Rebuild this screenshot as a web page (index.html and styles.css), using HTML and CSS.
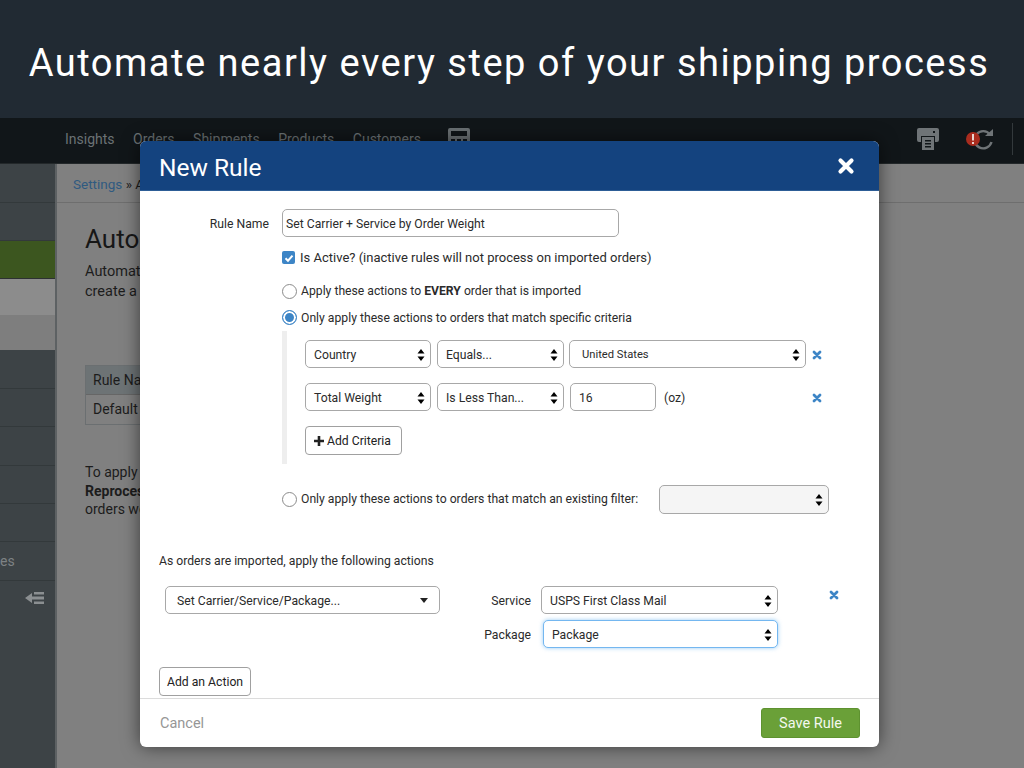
FILE: index.html
```html
<!DOCTYPE html>
<html lang="en">
<head>
<meta charset="utf-8">
<title>New Rule</title>
<link rel="stylesheet" href="styles.css">
</head>
<body>
<header class="banner"><h1>Automate nearly every step of your shipping process</h1></header>
<div class="app">
  <nav class="topnav">
    <a>Insights</a><a>Orders</a><a>Shipments</a><a>Products</a><a>Customers</a>
    <svg class="calc" width="24" height="24" viewBox="0 0 24 24"><path fill="#6a7073" fill-rule="evenodd" d="M3 1h18a2 2 0 0 1 2 2v19H1V3a2 2 0 0 1 2-2zm1 3v5h16V4zm0 8v3h4v-3zm6 0v3h4v-3zm6 0v3h4v-3z"/></svg>
    <span class="nav-spacer"></span>
    <svg class="printer" width="22" height="22" viewBox="0 0 22 22"><path fill="#6f7477" fill-rule="evenodd" d="M2 0h18a2 2 0 0 1 2 2v10a2 2 0 0 1-2 2h-2V8H4v6H2a2 2 0 0 1-2-2V2a2 2 0 0 1 2-2zm14 3v2h2V3zM5 9h12v13H5zm3 3v1.500h6V12zm0 3v1.500h6V15zm0 3v1.500h6V18z"/></svg>
    <span class="sync">
      <svg width="30" height="24" viewBox="0 0 30 24"><path fill="none" stroke="#6f7477" stroke-width="2.400" d="M24 6.500A8.600 8.600 0 1 0 25.500 14"/><path fill="#6f7477" d="M19 8h8V1z"/><circle cx="7" cy="11" r="7" fill="#a92c1e"/><rect x="6" y="6" width="2" height="6.500" fill="#e9d5d0"/><rect x="6" y="14" width="2" height="2" fill="#e9d5d0"/></svg>
    </span>
    <span class="nav-divider"></span>
  </nav>
  <div class="workspace">
    <aside class="sidebar">
      <div class="side-row side-first"></div>
      <div class="side-row"></div>
      <div class="side-row side-green"></div>
      <div class="side-row side-light"></div>
      <div class="side-row side-mid"></div>
      <div class="side-row"></div>
      <div class="side-row"></div>
      <div class="side-row"></div>
      <div class="side-row"></div>
      <div class="side-row"></div>
      <div class="side-row side-text">es</div>
      <div class="side-row side-collapse">
        <svg width="20" height="14" viewBox="0 0 20 14"><path fill="#8b8f91" d="M0 7l7-5v3.500h12v3H7V12zM9 1h10v2.500H9zM9 10.500h10V13H9z"/></svg>
      </div>
    </aside>
    <main class="page">
      <div class="crumbs"><a>Settings</a> » Automation</div>
      <div class="page-body">
        <h2>Automation Rules</h2>
        <p class="intro">Automate your workflow<br>create a rule</p>
        <div class="rules-table">
          <div class="rules-head">Rule Name</div>
          <div class="rules-cell">Default Carrier</div>
        </div>
        <p class="note">To apply rules<br><b>Reprocess</b><br>orders were</p>
      </div>
    </main>
  </div>

  <section class="modal">
    <header class="modal-head">
      <h3>New Rule</h3>
      <svg class="close" width="18" height="18" viewBox="0 0 18 18"><path d="M3.500 3.500l11 11M14.500 3.500l-11 11" stroke="#fff" stroke-width="4.200" stroke-linecap="round"/></svg>
    </header>
    <div class="modal-body">
      <div class="name-row">
        <label class="name-label">Rule Name</label>
        <div class="field name-field">Set Carrier + Service by Order Weight</div>
      </div>
      <div class="options">
        <div class="check-row">
          <span class="checkbox"><svg width="10" height="10" viewBox="0 0 10 10"><path d="M1.500 5.200l2.500 2.500 4.500-5" fill="none" stroke="#fff" stroke-width="2"/></svg></span>
          <span>Is Active? (inactive rules will not process on imported orders)</span>
        </div>
        <div class="radio-row first-radio"><span class="radio"></span><span>Apply these actions to <b>EVERY</b> order that is imported</span></div>
        <div class="radio-row second-radio"><span class="radio radio-on"></span><span class="radio-text">Only apply these actions to orders that match specific criteria</span></div>
        <div class="criteria">
          <div class="crit-row">
            <div class="field select w-a">Country<svg class="updown" width="8" height="14" viewBox="0 0 8 14"><path d="M4 1l3.500 4.500h-7zM4 13L.5 8.500h7z"/></svg></div>
            <div class="field select w-b">Equals...<svg class="updown" width="8" height="14" viewBox="0 0 8 14"><path d="M4 1l3.500 4.500h-7zM4 13L.5 8.500h7z"/></svg></div>
            <div class="field select w-c pad-wide">United States<svg class="updown" width="8" height="14" viewBox="0 0 8 14"><path d="M4 1l3.500 4.500h-7zM4 13L.5 8.500h7z"/></svg></div>
            <svg class="remove crit-remove" width="10" height="10" viewBox="0 0 10 10"><path d="M2 2l6 6M8 2L2 8" stroke="#3d85c6" stroke-width="2.800" stroke-linecap="round"/></svg>
          </div>
          <div class="crit-row">
            <div class="field select w-a">Total Weight<svg class="updown" width="8" height="14" viewBox="0 0 8 14"><path d="M4 1l3.500 4.500h-7zM4 13L.5 8.500h7z"/></svg></div>
            <div class="field select w-b">Is Less Than...<svg class="updown" width="8" height="14" viewBox="0 0 8 14"><path d="M4 1l3.500 4.500h-7zM4 13L.5 8.500h7z"/></svg></div>
            <div class="field w-d">16</div>
            <span class="unit">(oz)</span>
            <svg class="remove crit-remove-2" width="10" height="10" viewBox="0 0 10 10"><path d="M2 2l6 6M8 2L2 8" stroke="#3d85c6" stroke-width="2.800" stroke-linecap="round"/></svg>
          </div>
          <button class="btn add-criteria"><svg width="10" height="10" viewBox="0 0 10 10"><path d="M5 0v10M0 5h10" stroke="#222" stroke-width="2.600"/></svg>Add Criteria</button>
        </div>
        <div class="radio-row filter-row">
          <span class="radio"></span><span>Only apply these actions to orders that match an existing filter:</span>
          <div class="field select w-f"><svg class="updown" width="8" height="14" viewBox="0 0 8 14"><path d="M4 1l3.500 4.500h-7zM4 13L.5 8.500h7z"/></svg></div>
        </div>
      </div>
      <p class="apply-text">As orders are imported, apply the following actions</p>
      <div class="action-row">
        <div class="field select w-action">Set Carrier/Service/Package...<svg width="8" height="5" viewBox="0 0 8 5"><path d="M0 0h8L4 5z" fill="#222"/></svg></div>
        <div class="service-grid">
          <label class="service-label">Service</label>
          <div class="field select w-s">USPS First Class Mail<svg class="updown" width="8" height="14" viewBox="0 0 8 14"><path d="M4 1l3.500 4.500h-7zM4 13L.5 8.500h7z"/></svg></div>
          <label class="service-label">Package</label>
          <div class="field select w-p focus">Package<svg class="updown" width="8" height="14" viewBox="0 0 8 14"><path d="M4 1l3.500 4.500h-7zM4 13L.5 8.500h7z"/></svg></div>
        </div>
        <svg class="remove action-remove" width="10" height="10" viewBox="0 0 10 10"><path d="M2 2l6 6M8 2L2 8" stroke="#3d85c6" stroke-width="2.800" stroke-linecap="round"/></svg>
      </div>
      <button class="btn add-action">Add an Action</button>
    </div>
    <footer class="modal-foot">
      <a class="cancel">Cancel</a>
      <button class="save">Save Rule</button>
    </footer>
  </section>
</div>
</body>
</html>
```

FILE: styles.css
```css
* { box-sizing: border-box; }
html, body { margin: 0; padding: 0; }
body {
  width: 1024px;
  height: 768px;
  overflow: hidden;
  font-family: Roboto, "Liberation Sans", sans-serif;
  background: #808080;
  color: #262626;
}
.banner {
  height: 118px;
  background: #212a33;
  display: flex;
  align-items: center;
  justify-content: center;
  padding: 8px 6px 0 0;
}
.banner h1 {
  margin: 0;
  font-size: 38px;
  font-weight: 400;
  letter-spacing: 1.51px;
  color: #fff;
  white-space: nowrap;
}
.app { position: relative; height: 650px; display: flex; flex-direction: column; }
.topnav {
  height: 46px;
  flex: none;
  background: #111619;
  border-bottom: 1px solid #23282a;
  display: flex;
  align-items: flex-start;
  padding: 13px 0 0 65px;
  font-size: 14px;
  color: #6b7275;
}
.topnav a { margin-right: 18.500px; line-height: 17px; }
.calc { margin: -4px 0 0 8px; }
.nav-spacer { flex: 1; }
.printer { margin: -3px 1px 0 0; }
.sync { margin: -3px 0 0 26px; display: block; height: 24px; }
.nav-divider { width: 1px; height: 32px; margin: -8px 11px 0 16px; background: #33393c; }

.workspace { flex: 1; display: flex; }
.sidebar {
  width: 57px;
  flex: none;
  background: #3d4346;
  border-right: 2px solid #5d6163;
  display: flex;
  flex-direction: column;
}
.side-row { height: 38.400px; border-bottom: 1px solid #33393b; flex: none; font-size: 14px; color: #7d8284; }
.side-first { height: 39px; }
.side-green { background: #3c561f; height: 38px; border-bottom-color: #2d3132; }
.side-light { background: #8c8c8c; height: 36px; border-bottom: 0; }
.side-mid { background: #7e7e7e; height: 35px; border-bottom: 0; }
.side-text { display: flex; align-items: center; height: 39px; }
.side-collapse { border: 0; height: 34px; display: flex; justify-content: flex-end; align-items: center; padding: 0 10px 0 0; }

.page { flex: 1; background: #808080; font-size: 14px; color: #1c1c1c; }
.crumbs {
  height: 39px;
  border-bottom: 1px solid #6e6e6e;
  padding: 12px 0 0 16px;
  font-size: 13.500px;
  white-space: nowrap;
}
.crumbs a { color: #2f5a80; }
.page-body { padding: 19px 0 0 28px; white-space: nowrap; }
.page-body h2 { margin: 0; font-size: 26px; font-weight: 400; line-height: 34px; color: #171717; }
.intro { margin: 6px 0 0; line-height: 20px; font-size: 14.500px; }
.rules-table { margin: 63px 0 0; width: 200px; border: 1px solid #6b6f71; }
.rules-head { height: 29px; background: #6d7375; padding: 6px 7px; border-bottom: 1px solid #666; }
.rules-cell { height: 29px; padding: 6px 7px; }
.note { margin: 38px 0 0; line-height: 18.500px; }

.modal {
  position: absolute;
  left: 140px;
  top: 23px;
  width: 739px;
  height: 606px;
  background: #fff;
  border-radius: 6px;
  overflow: hidden;
  box-shadow: 0 0 18px rgba(0, 0, 0, .55);
  display: flex;
  flex-direction: column;
  font-size: 12.200px;
  color: #2b2b2b;
}
.modal-head {
  height: 50px;
  flex: none;
  background: #14437f;
  border-bottom: 1px solid #2d5d96;
  display: flex;
  align-items: center;
  justify-content: space-between;
  padding: 3px 24px 0 19px;
  color: #fff;
}
.modal-head h3 { margin: 0; font-size: 24.500px; font-weight: 400; }
.close { margin-top: -2px; }
.modal-body { flex: 1; padding-top: 18px; position: relative; }
.field {
  height: 28px;
  border: 1.500px solid #a8a8a8;
  border-radius: 5px;
  background: #fff;
  display: flex;
  align-items: center;
  padding: 1px 8px 0;
  flex: none;
  white-space: nowrap;
}
.select { justify-content: space-between; padding-right: 5px; }
.name-row { display: flex; align-items: center; }
.name-label { width: 129px; text-align: right; margin-right: 13px; padding-top: 1px; }
.name-field { width: 337px; padding: 1px 3px 0; }
.options { margin: 12px 0 0 142px; }
.check-row { display: flex; align-items: center; height: 17px; gap: 5px; font-size: 13px; }
.checkbox {
  width: 13px;
  height: 13px;
  border-radius: 2px;
  background: #3d85c6;
  display: flex;
  align-items: center;
  justify-content: center;
}
.radio-row { display: flex; align-items: center; height: 16px; gap: 4px; }
.first-radio { margin-top: 17px; }
.second-radio { margin-top: 10px; }
.radio-text { padding-top: 2px; }
.radio {
  width: 15px;
  height: 15px;
  flex: none;
  border: 1.500px solid #8b8b8b;
  border-radius: 50%;
  background: #fff;
}
.radio-on { border-color: #3d85c6; box-shadow: inset 0 0 0 2px #fff; background: #3d85c6; }
.criteria {
  margin-top: 6px;
  height: 133px;
  border-left: 5px solid #eee;
  padding: 9px 0 0 18px;
  position: relative;
}
.crit-row { display: flex; align-items: center; gap: 6px; margin-bottom: 15px; position: relative; height: 28px; }
.w-a { width: 126px; padding-left: 8px; }
.w-b { width: 127px; padding-left: 8px; }
.w-c { width: 237px; margin-left: -1px; font-size: 11.200px; }
.pad-wide { padding-left: 12px; }
.w-d { width: 86px; }
.unit { margin-left: 2px; padding-top: 1px; }
.remove { position: absolute; }
.crit-remove, .crit-remove-2 { left: 507px; top: 10px; }
.btn {
  font: inherit;
  color: #222;
  background: #fff;
  border: 1.500px solid #a0a0a0;
  border-radius: 4px;
  height: 29px;
  padding: 0 7px;
  display: flex;
  align-items: center;
  gap: 3px;
  white-space: nowrap;
}
.add-criteria { width: 97px; padding: 0 8px; }
.filter-row { margin-top: 27px; }
.w-f { width: 170px; margin-left: 17px; background: #f5f5f5; justify-content: flex-end; height: 29px; }
.apply-text { margin: 47px 0 0 19px; line-height: 15px; }
.action-row { display: flex; position: relative; margin: 17px 0 0 25px; }
.w-action { width: 275px; padding: 1px 11px 0; }
.service-grid {
  display: grid;
  grid-template-columns: 65px auto;
  column-gap: 10px;
  row-gap: 6px;
  margin-left: 26px;
  align-items: center;
  height: 62px;
}
.service-label { text-align: right; padding-top: 1px; }
.w-s { width: 237px; }
.w-p { width: 235px; margin-left: 2px; }
.focus { border-color: #74b7f0; box-shadow: 0 0 4px rgba(82, 168, 236, .6); }
.action-remove { left: 664px; top: 4px; }
.add-action { margin: 19px 0 0 19px; width: 92px; padding-top: 1px; }
.modal-foot {
  height: 49px;
  flex: none;
  border-top: 1.500px solid #dcdcdc;
  display: flex;
  align-items: center;
  justify-content: space-between;
  padding: 0 19px 0 20px;
}
.cancel { color: #969696; font-size: 14.500px; }
.save {
  font: inherit;
  font-size: 14.500px;
  color: #f4f8ef;
  width: 99px;
  height: 30px;
  background: #6aa038;
  border: 1px solid #5e9230;
  border-radius: 3px;
}
```
